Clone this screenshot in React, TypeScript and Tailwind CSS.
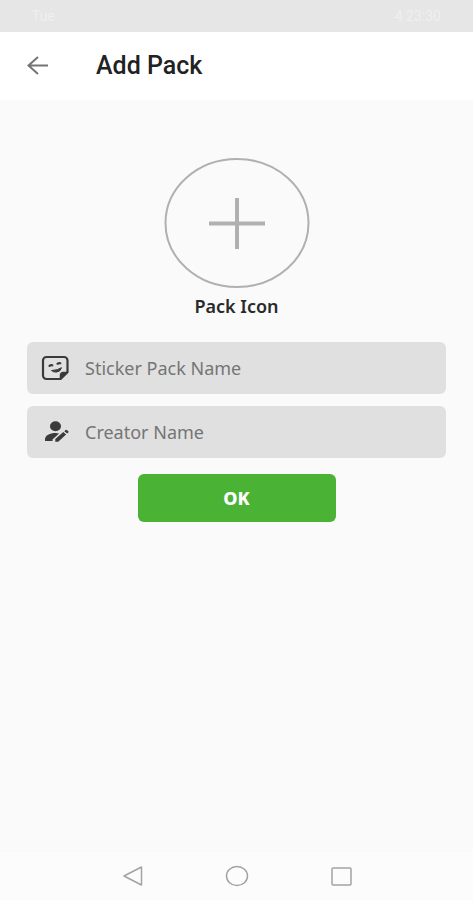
import type { ReactNode } from "react";

function StickerIcon() {
  return (
    <svg viewBox="0 0 28 26" className="w-7 h-[26px]" fill="none" stroke="#3a3a3a" strokeWidth="2.200" strokeLinejoin="round" aria-hidden="true">
      <path d="M5.500 2h17.500a3.500 3.500 0 0 1 3.500 3.500v11.500l-7 7H5.500A3.500 3.500 0 0 1 2 20.500v-15A3.500 3.500 0 0 1 5.500 2Z" />
      <path d="M26.500 17.500h-4a3 3 0 0 0-3 3v3.500Z" fill="#3a3a3a" strokeWidth="1.500" />
      <path d="M8.500 10.800q1.300-.9 2.800-.5M16.500 8.700q1.500-.8 2.800-.5" strokeLinecap="round" />
      <path d="M10.500 15.500q6.500-.3 10-2.800-1 4-5 4.400-3 .2-5-1.600Z" fill="#3a3a3a" strokeWidth="1" />
    </svg>
  );
}

function CreatorIcon() {
  return (
    <svg viewBox="0 0 28 26" className="w-7 h-[26px]" fill="#3a3a3a" aria-hidden="true">
      <ellipse cx="14.500" cy="7.200" rx="5.500" ry="5" />
      <path d="M4 22v-1.700c0-4 5-6.300 10.500-6.300 1.300 0 2.600.2 3.600.5l-6.600 6v1.500Z" />
      <path d="M14.300 22.800v-2.700l8-7 2.800 2.400-7.900 7.300ZM23.300 12.200l1.200-1.100q.8-.6 1.600.1l1.200 1q.7.7 0 1.400l-1.200 1Z" />
    </svg>
  );
}

function Field({ id, label, icon }: { id: string; label: string; icon: ReactNode }) {
  return (
    <div className="flex items-center gap-4 h-13 pl-[14px] pr-4 rounded-md bg-[#e0e0e0]">
      <label htmlFor={id} aria-label={label} className="shrink-0">
        {icon}
      </label>
      <input
        id={id}
        type="text"
        placeholder={label}
        className="flex-1 min-w-0 h-full pb-px bg-transparent outline-none text-lg text-[#333] placeholder:text-[#757575]"
      />
    </div>
  );
}

export default function App() {
  return (
    <div className="flex flex-col min-h-screen bg-[#fafafa] font-['Noto_Sans','Open_Sans',sans-serif]">
      {/* Status bar */}
      <div className="flex items-center justify-between h-8 px-8 bg-[#e6e6e6] text-sm text-[#efefef] font-[Roboto,sans-serif]">
        <span>Tue</span>
        <span>4 23:30</span>
      </div>

      <header className="flex items-center gap-11 h-17 px-6 bg-white">
        <button type="button" aria-label="Back">
          <svg viewBox="0 0 28 24" className="w-7 h-6" fill="none" stroke="#747474" strokeWidth="2" aria-hidden="true">
            <path d="M24 11.500H4.500M14 3l-9.500 8.500L14 20" />
          </svg>
        </button>
        <h1 className="text-[25px] font-medium text-[#222] font-[Roboto,sans-serif]">Add Pack</h1>
      </header>

      <main className="flex-1 flex flex-col items-center px-[27px] pt-[58px]">
        <button type="button" className="flex flex-col items-center gap-1">
          <svg viewBox="0 0 146 132" className="w-[146px] h-[132px]" fill="none" stroke="#b0b0b0" aria-hidden="true">
            <ellipse cx="73" cy="65" rx="71.500" ry="64" strokeWidth="2" />
            <path d="M45 65.500h56M73 40v51" strokeWidth="4" />
          </svg>
          <span className="text-lg leading-6 font-semibold text-[#2a2a2a]">Pack Icon</span>
        </button>

        <form className="flex flex-col w-full gap-3 mt-6" onSubmit={(e) => e.preventDefault()}>
          <Field id="pack-name" label="Sticker Pack Name" icon={<StickerIcon />} />
          <Field id="creator-name" label="Creator Name" icon={<CreatorIcon />} />
          <button type="submit" className="self-center w-[198px] h-12 mt-1 rounded-md bg-[#4ab234] text-lg font-extrabold text-white">
            OK
          </button>
        </form>
      </main>

      {/* System navigation */}
      <nav className="flex items-center justify-center gap-20 h-12 bg-[#fcfcfc]">
        <button type="button" aria-label="Go back">
          <svg viewBox="0 0 24 24" className="w-6 h-6" fill="none" stroke="#a3a3a3" strokeWidth="1.500" strokeLinejoin="round" aria-hidden="true">
            <path d="M20.500 3v18L3 12Z" />
          </svg>
        </button>
        <button type="button" aria-label="Home">
          <svg viewBox="0 0 24 24" className="w-6 h-6" fill="none" stroke="#a3a3a3" strokeWidth="1.500" aria-hidden="true">
            <ellipse cx="12" cy="12" rx="10.500" ry="9.500" />
          </svg>
        </button>
        <button type="button" aria-label="Recent apps">
          <svg viewBox="0 0 24 24" className="w-6 h-6" fill="none" stroke="#a3a3a3" strokeWidth="1.500" aria-hidden="true">
            <rect x="3" y="4" width="19" height="17" rx="1" />
          </svg>
        </button>
      </nav>
    </div>
  );
}
